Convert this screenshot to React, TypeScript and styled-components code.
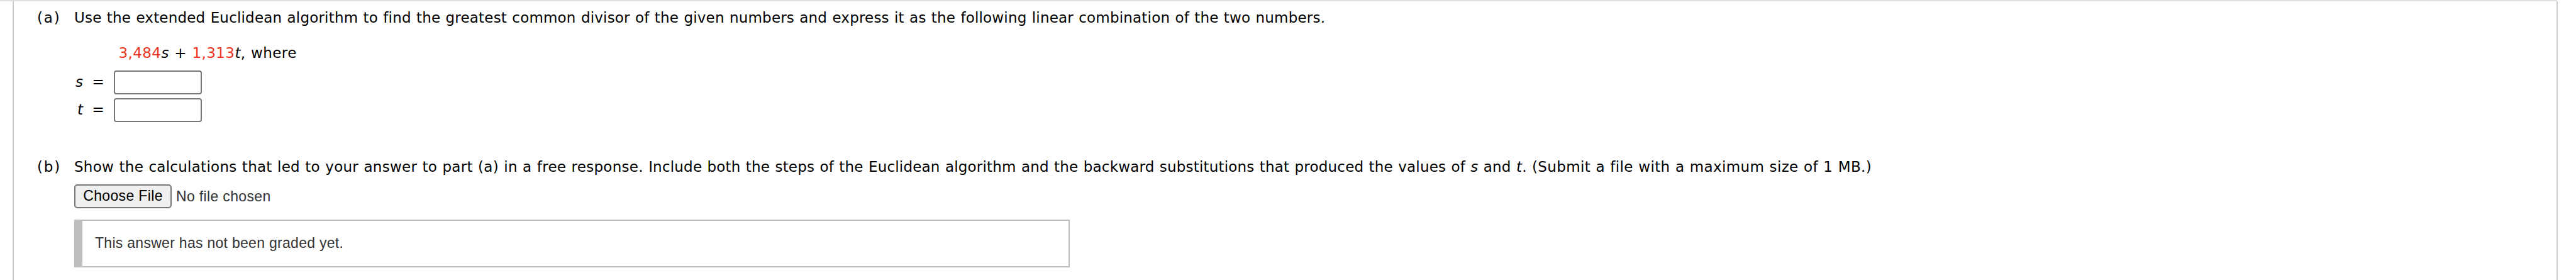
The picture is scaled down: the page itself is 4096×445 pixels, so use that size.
import React from 'react';
import styled, { createGlobalStyle } from 'styled-components';

interface IAnswerField {
    name: string;
}

interface ISentenceProps {
    $tracking: string;
}

const answerFields: IAnswerField[] = [{ name: 's' }, { name: 't' }];

const App: React.FunctionComponent = () => {
    return (
        <>
            <GlobalStyle />
            <TopRule />
            <QuestionPanel>
                <Part>
                    <PartLabel>(a)</PartLabel>
                    <PartBody>
                        <Prompt>
                            <Sentence $tracking="0.18px">
                                Use the extended Euclidean algorithm to find the
                                greatest common divisor of the given numbers and
                                express it as the following linear combination
                                of the two numbers.
                            </Sentence>
                        </Prompt>
                        <Expression>
                            <Value>3,484</Value>
                            <i>s</i> + <Value>1,313</Value>
                            <i>t</i>, where
                        </Expression>
                        <AnswerFields>
                            {answerFields.map(({ name }: IAnswerField) => (
                                <AnswerRow key={name}>
                                    <Variable>{name}</Variable>
                                    <Equals>=</Equals>
                                    <AnswerInput aria-label={name} />
                                </AnswerRow>
                            ))}
                        </AnswerFields>
                    </PartBody>
                </Part>
                <Part>
                    <PartLabel>(b)</PartLabel>
                    <PartBody>
                        <Prompt>
                            <Sentence $tracking="0.26px">
                                Show the calculations that led to your answer to
                                part (a) in a free response.{' '}
                            </Sentence>
                            <Sentence $tracking="0.187px">
                                Include both the steps of the Euclidean
                                algorithm and the backward substitutions that
                                produced the values of <i>s</i> and <i>t</i>.{' '}
                            </Sentence>
                            <Sentence $tracking="0.345px">
                                (Submit a file with a maximum size of 1 MB.)
                            </Sentence>
                        </Prompt>
                        <FilePicker>
                            <FileButton type="button">Choose File</FileButton>
                            <FileName>No file chosen</FileName>
                        </FilePicker>
                        <GradeNotice>
                            This answer has not been graded yet.
                        </GradeNotice>
                    </PartBody>
                </Part>
            </QuestionPanel>
        </>
    );
};

const GlobalStyle = createGlobalStyle`
    * {
        box-sizing: border-box;
    }
    body {
        margin: 0;
        background: #fff;
        color: #000;
        font-family: Verdana, 'DejaVu Sans', sans-serif;
        font-size: 23.03px;
        line-height: 28px;
        overflow: hidden;
    }
`;

const TopRule = styled.div`
    width: 4066px;
    height: 2px;
    background: #e0e0e0;
`;

const QuestionPanel = styled.main`
    display: flex;
    flex-direction: column;
    gap: 57px;
    width: 4047px;
    height: 443px;
    margin-left: 20px;
    padding: 12px 0 0 37px;
    border: solid #ccc;
    border-width: 0 2px;
`;

const Part = styled.section`
    display: flex;
`;

const PartLabel = styled.div`
    width: 59px;
    letter-spacing: 1.8px;
`;

const PartBody = styled.div`
    flex: 1;
`;

const Prompt = styled.p`
    margin: 0;
    white-space: nowrap;
    word-spacing: 0.78px;
`;

const Sentence = styled.span<ISentenceProps>`
    letter-spacing: ${({ $tracking }) => $tracking};
`;

const Expression = styled.p`
    margin: 28px 0 0 70.5px;
    letter-spacing: 0.4px;
    word-spacing: 0.8px;
`;

const Value = styled.span`
    color: #ee3524;
`;

const AnswerFields = styled.div`
    display: flex;
    flex-direction: column;
    gap: 6px;
    margin-top: 14px;
`;

const AnswerRow = styled.label`
    display: grid;
    grid-template-columns: 14px 49px 140px;
    height: 38px;
    line-height: 36px;
`;

const Variable = styled.i`
    text-align: right;
`;

const Equals = styled.span`
    padding-left: 14.5px;
`;

const AnswerInput = styled.input`
    width: 140px;
    height: 38px;
    border: 2px solid #767676;
    border-radius: 4px;
    background: #fff;
`;

const FilePicker = styled.div`
    display: flex;
    margin-top: 14px;
    font-family: Helvetica, 'Liberation Sans', sans-serif;
    letter-spacing: 0.34px;
`;

const FileButton = styled.button`
    width: 155px;
    height: 38px;
    padding: 0 0 2px;
    border: 2px solid #767676;
    border-radius: 5px;
    background: #efefef;
    color: #000;
    font: inherit;
    letter-spacing: inherit;
    line-height: 32px;
`;

const FileName = styled.span`
    margin-left: 7px;
    color: #333;
    line-height: 38px;
`;

const GradeNotice = styled.div`
    width: 1583px;
    height: 76px;
    margin-top: 18px;
    padding-left: 20px;
    border: 2px solid #bdbdbd;
    border-left-width: 13px;
    color: #333;
    font-family: Helvetica, 'Liberation Sans', sans-serif;
    letter-spacing: 0.28px;
    line-height: 71px;
`;

export default App;
